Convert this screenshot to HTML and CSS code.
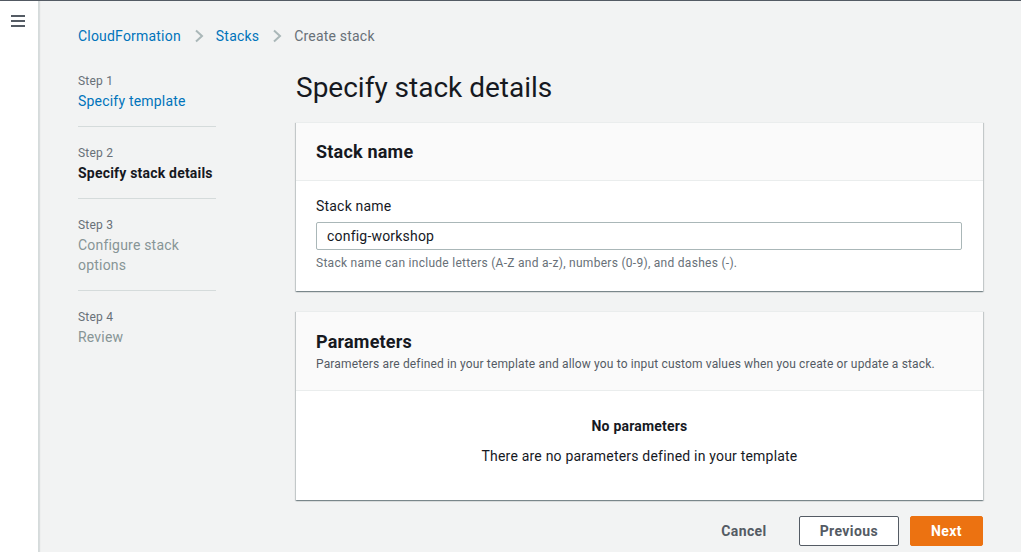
FILE: index.html
```html
<!DOCTYPE html>
<html lang="en">
<head>
<meta charset="utf-8">
<title>Create stack</title>
<link rel="stylesheet" href="styles.css">
</head>
<body>
<div class="app">
  <aside class="sidebar">
    <button class="menu-btn" aria-label="Open navigation">
      <svg width="14" height="12" viewBox="0 0 14 12"><path d="M0 1h14M0 6h14M0 11h14" stroke="#545b64" stroke-width="2" fill="none"/></svg>
    </button>
  </aside>
  <main class="main">
    <nav class="breadcrumbs">
      <a class="crumb-link" href="#">CloudFormation</a>
      <span class="chev"><svg width="10" height="14" viewBox="0 0 10 14"><path d="M2 1.5l6 5.5-6 5.5" stroke="#aab7b8" stroke-width="2" fill="none"/></svg></span>
      <a class="crumb-link" href="#">Stacks</a>
      <span class="chev"><svg width="10" height="14" viewBox="0 0 10 14"><path d="M2 1.5l6 5.5-6 5.5" stroke="#aab7b8" stroke-width="2" fill="none"/></svg></span>
      <span class="crumb-current">Create stack</span>
    </nav>
    <div class="layout">
      <ol class="steps">
        <li class="step">
          <div class="step-label">Step 1</div>
          <a class="step-title link" href="#">Specify template</a>
        </li>
        <li class="step">
          <div class="step-label">Step 2</div>
          <div class="step-title active">Specify stack details</div>
        </li>
        <li class="step">
          <div class="step-label">Step 3</div>
          <div class="step-title disabled">Configure stack<br>options</div>
        </li>
        <li class="step last">
          <div class="step-label">Step 4</div>
          <div class="step-title disabled">Review</div>
        </li>
      </ol>
      <div class="content">
        <h1 class="page-title">Specify stack details</h1>
        <section class="panel">
          <div class="panel-header">
            <h2 class="panel-title">Stack name</h2>
          </div>
          <div class="panel-body">
            <label class="field-label" for="stackname">Stack name</label>
            <input class="input" id="stackname" type="text" value="config-workshop">
            <div class="hint">Stack name can include letters (A-Z and a-z), numbers (0-9), and dashes (-).</div>
          </div>
        </section>
        <section class="panel panel-params">
          <div class="panel-header header-params">
            <h2 class="panel-title">Parameters</h2>
            <p class="panel-desc">Parameters are defined in your template and allow you to input custom values when you create or update a stack.</p>
          </div>
          <div class="panel-body empty">
            <div class="empty-title">No parameters</div>
            <div class="empty-text">There are no parameters defined in your template</div>
          </div>
        </section>
        <div class="actions">
          <button class="btn btn-link">Cancel</button>
          <button class="btn btn-normal">Previous</button>
          <button class="btn btn-primary">Next</button>
        </div>
      </div>
    </div>
  </main>
</div>
</body>
</html>
```

FILE: styles.css
```css
* { box-sizing: border-box; }
html, body { margin: 0; padding: 0; height: 100%; }
body {
  font-family: Roboto, "Liberation Sans", Arial, sans-serif;
  font-size: 14px;
  line-height: 20px;
  letter-spacing: 0.2px;
  color: #16191f;
  background: #f2f3f3;
  overflow: hidden;
}
.app {
  display: flex;
  height: 100vh;
  border-top: 1px solid #545b64;
}
.sidebar {
  width: 39px;
  flex: none;
  background: #fff;
  border-right: 1px solid #d5dbdb;
  box-shadow: 1px 0 1px rgba(0, 28, 36, 0.1);
  position: relative;
  z-index: 1;
}
.menu-btn {
  display: block;
  margin: 14px 0 0 11px;
  padding: 0;
  border: 0;
  background: none;
  line-height: 0;
}
.main {
  flex: 1;
  padding: 25px 38px 0 39px;
}
.breadcrumbs {
  display: flex;
  align-items: center;
  height: 20px;
  font-size: 14px;
}
.crumb-link { color: #0073bb; text-decoration: none; }
.chev { display: flex; align-items: center; margin: 0 12px 0 13px; line-height: 0; }
.crumb-current { color: #687078; }
.layout {
  display: grid;
  grid-template-columns: 138px 1fr;
  column-gap: 80px;
  margin-top: 24px;
}
.steps {
  list-style: none;
  margin: 0;
  padding: 3px 0 0;
}
.step {
  padding: 18px 0 15px;
  border-bottom: 1px solid #d5dbdb;
}
.step:first-child { padding-top: 0; }
.step.last { border-bottom: 0; }
.step-label {
  font-size: 12px;
  line-height: 16px;
  color: #687078;
  margin-bottom: 2px;
}
.step-title { display: block; font-size: 14px; line-height: 20px; }
.step-title.link { color: #0073bb; text-decoration: none; }
.step-title.active { font-weight: 700; color: #16191f; }
.step-title.disabled { color: #879596; }
.page-title {
  margin: 0 0 16px;
  font-size: 28px;
  line-height: 36px;
  font-weight: 400;
  letter-spacing: 0;
  color: #16191f;
}
.panel {
  background: #fff;
  border-top: 1px solid #eaeded;
  box-shadow: 0 1px 1px 0 rgba(0, 28, 36, 0.3), 1px 1px 1px 0 rgba(0, 28, 36, 0.15), -1px 1px 1px 0 rgba(0, 28, 36, 0.15);
  margin-bottom: 20px;
}
.panel-header {
  background: #fafafa;
  border-bottom: 1px solid #eaeded;
  padding: 18px 20px 17px;
}
.panel-title {
  margin: 0;
  font-size: 18px;
  line-height: 22px;
  font-weight: 700;
}
.panel-body {
  padding: 15px 21px 20px 20px;
}
.field-label {
  display: block;
  font-size: 14px;
  line-height: 20px;
  margin-bottom: 6px;
}
.input {
  display: block;
  width: 100%;
  height: 28px;
  border: 1px solid #aab7b8;
  border-radius: 2px;
  padding: 0 10px;
  font-family: inherit;
  font-size: 14px;
  letter-spacing: 0.2px;
  color: #16191f;
  background: #fff;
}
.hint {
  margin-top: 5px;
  font-size: 12px;
  line-height: 16px;
  letter-spacing: 0.28px;
  color: #687078;
}
.header-params { padding: 19px 20px 18px; }
.panel-desc {
  margin: 3px 0 0;
  font-size: 12px;
  line-height: 16px;
  letter-spacing: 0.15px;
  color: #545b64;
}
.panel-body.empty {
  text-align: center;
  padding: 25px 20px 34px;
}
.empty-title { font-weight: 700; line-height: 20px; }
.empty-text { margin-top: 10px; line-height: 20px; }
.actions {
  display: flex;
  justify-content: flex-end;
  align-items: center;
  gap: 11px;
  margin-top: -4px;
}
.btn {
  font-family: inherit;
  font-size: 14px;
  font-weight: 700;
  letter-spacing: 0.4px;
  height: 30px;
  border-radius: 2px;
  padding: 0 20px;
  cursor: pointer;
}
.btn-link { background: none; border: 1px solid transparent; color: #545b64; }
.btn-normal { background: #fff; border: 1px solid #545b64; color: #545b64; }
.btn-primary { background: #ec7211; border: 1px solid #ec7211; color: #fff; }
```
